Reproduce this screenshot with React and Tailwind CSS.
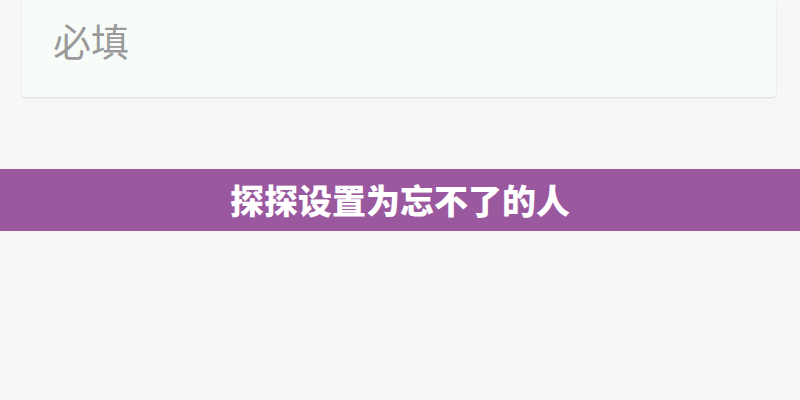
export default function App() {
  return (
    <div
      className="flex h-[400px] w-[800px] flex-col bg-[#f7f7f7]"
      style={{ fontFamily: '"Noto Sans CJK SC", "Noto Sans", sans-serif' }}
    >
      <div className="ml-[22px] mr-[24px] flex h-[97px] items-center rounded-b-[4px] bg-[#f8fcf8] pb-[18px] pl-[31px] shadow-[0_1px_2px_rgba(0,0,0,0.12)]">
        <span className="text-[38px] leading-none text-[#9a9a9a]">必填</span>
      </div>

      <div className="mt-[72px] flex h-[62px] items-center justify-center bg-[#9a599f]">
        <span className="text-[34px] font-black leading-none text-white">
          探探设置为忘不了的人
        </span>
      </div>
    </div>
  );
}
